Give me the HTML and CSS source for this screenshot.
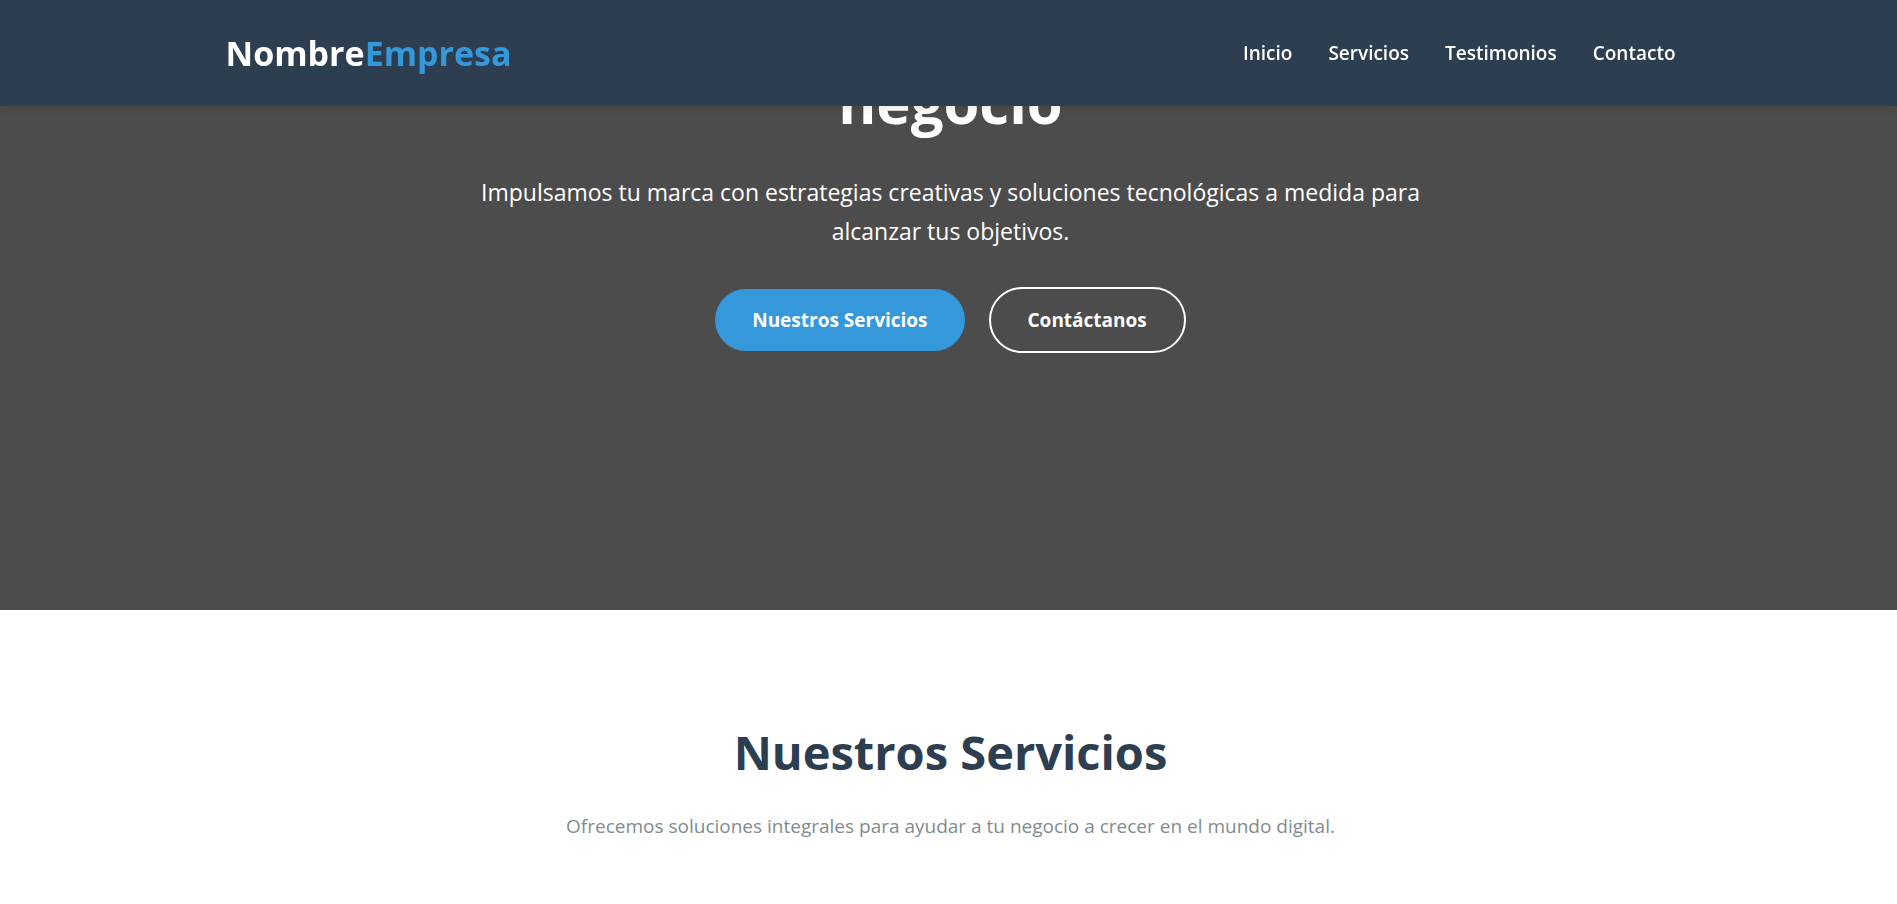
FILE: index.html
```html
<!DOCTYPE html>
<html lang="es">
<head>
<meta charset="utf-8">
<meta name="viewport" content="width=device-width, initial-scale=1">
<title>NombreEmpresa</title>
<link rel="stylesheet" href="styles.css">
</head>
<body>
<header class="header">
  <div class="container header-inner">
    <a class="logo" href="#inicio">Nombre<span class="logo-accent">Empresa</span></a>
    <nav class="nav">
      <a class="nav-link" href="#inicio">Inicio</a>
      <a class="nav-link" href="#servicios">Servicios</a>
      <a class="nav-link" href="#testimonios">Testimonios</a>
      <a class="nav-link" href="#contacto">Contacto</a>
    </nav>
  </div>
</header>
<main>
  <section class="hero" id="inicio">
    <h1 class="hero-title">negocio</h1>
    <p class="hero-text">Impulsamos tu marca con estrategias creativas y soluciones tecnológicas a medida para alcanzar tus objetivos.</p>
    <div class="hero-actions">
      <a class="btn btn-primary" href="#servicios">Nuestros Servicios</a>
      <a class="btn btn-outline" href="#contacto">Contáctanos</a>
    </div>
  </section>
  <section class="services" id="servicios">
    <h2 class="section-title">Nuestros Servicios</h2>
    <p class="section-text">Ofrecemos soluciones integrales para ayudar a tu negocio a crecer en el mundo digital.</p>
  </section>
</main>
</body>
</html>
```
FILE: styles.css
```css
* {
  box-sizing: border-box;
  margin: 0;
  padding: 0;
}

body {
  font-family: "Segoe UI", "Open Sans", "Noto Sans", sans-serif;
  background: #fff;
  color: #2c3e50;
  overflow-x: hidden;
}

a {
  text-decoration: none;
}

.container {
  width: 100%;
  max-width: 1450px;
  margin: 0 auto;
}

.header {
  position: fixed;
  top: 0;
  left: 0;
  width: 100%;
  z-index: 10;
  padding: 24px 24px 24px 28px;
  background: #2c3e50;
  box-shadow: 0 2px 10px rgba(0, 0, 0, 0.1);
}

.header-inner {
  display: flex;
  align-items: center;
  justify-content: space-between;
}

.logo {
  font-size: 34px;
  line-height: 58px;
  font-weight: 700;
  color: #fff;
}

.logo-accent {
  color: #3498db;
}

.nav {
  display: flex;
  gap: 36px;
}

.nav-link {
  font-size: 19px;
  line-height: 32px;
  font-weight: 600;
  color: #fff;
}

.hero {
  display: flex;
  flex-direction: column;
  align-items: center;
  padding: 66px 24px 257px 28px;
  background: #4c4c4c;
  color: #fff;
  text-align: center;
}

.hero-title {
  font-size: 58px;
  line-height: 72px;
  font-weight: 700;
  margin-bottom: 35px;
}

.hero-text {
  max-width: 960px;
  font-size: 23px;
  line-height: 39px;
  margin-bottom: 36px;
}

.hero-actions {
  display: flex;
  flex-wrap: wrap;
  align-items: center;
  justify-content: center;
  gap: 24px;
}

.btn {
  padding: 15px 37px;
  border-radius: 50px;
  font-size: 19px;
  line-height: 32px;
  font-weight: 700;
  color: #fff;
}

.btn-primary {
  background: #3498db;
}

.btn-outline {
  border: 2px solid #fff;
}

.services {
  padding: 102px 24px 96px 28px;
  text-align: center;
}

.section-title {
  font-size: 47px;
  line-height: 80px;
  font-weight: 700;
  margin-bottom: 18px;
}

.section-text {
  font-size: 19px;
  line-height: 32px;
  color: #7f8c8d;
}
```
